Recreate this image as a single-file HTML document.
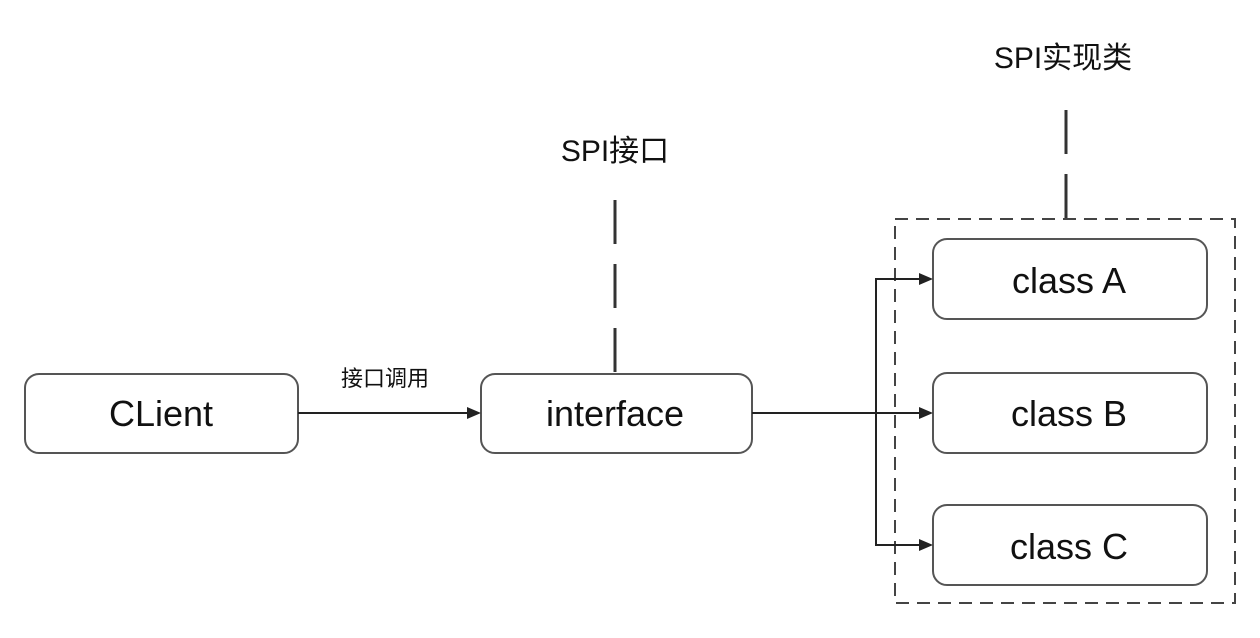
<!DOCTYPE html>
<html><head><meta charset="utf-8"><style>
html,body{margin:0;padding:0;background:#fff;width:1260px;height:638px;overflow:hidden}
</style></head><body>
<svg width="1260" height="638" viewBox="0 0 1260 638" xmlns="http://www.w3.org/2000/svg" style="display:block">
<g fill="#fff" stroke="#555" stroke-width="2">
<rect x="25" y="374" width="273" height="79" rx="14"/>
<rect x="481" y="374" width="271" height="79" rx="14"/>
<rect x="933" y="239" width="274" height="80" rx="14"/>
<rect x="933" y="373" width="274" height="80" rx="14"/>
<rect x="933" y="505" width="274" height="80" rx="14"/>
</g>
<rect x="895" y="219" width="340" height="384" fill="none" stroke="#444" stroke-width="2" stroke-dasharray="13,8"/>
<g stroke="#333" stroke-width="3" fill="none">
<path d="M615 200 V373" stroke-dasharray="44,20"/>
<path d="M1066 110 V219" stroke-dasharray="44,20"/>
</g>
<g stroke="#222" stroke-width="2" fill="none">
<path d="M298 413 H470"/>
<path d="M752 413 H922"/>
<path d="M876 413 V279 H922"/>
<path d="M876 413 V545 H922"/>
</g>
<g fill="#222">
<path d="M467 407 L481 413 L467 419 Z"/>
<path d="M919 407 L933 413 L919 419 Z"/>
<path d="M919 273 L933 279 L919 285 Z"/>
<path d="M919 539 L933 545 L919 551 Z"/>
</g>
<g font-family="'Liberation Sans','Noto Sans CJK SC',sans-serif" fill="#111" text-anchor="middle">
<text x="161" y="426" font-size="36">CLient</text>
<text x="615" y="426" font-size="36">interface</text>
<text x="1069" y="293" font-size="36">class A</text>
<text x="1069" y="426" font-size="36">class B</text>
<text x="1069" y="559" font-size="36">class C</text>
<text x="615" y="161" font-size="30">SPI接口</text>
<text x="1063" y="68" font-size="30">SPI实现类</text>
<text x="385" y="386" font-size="22">接口调用</text>
</g>
</svg>
</body></html>
